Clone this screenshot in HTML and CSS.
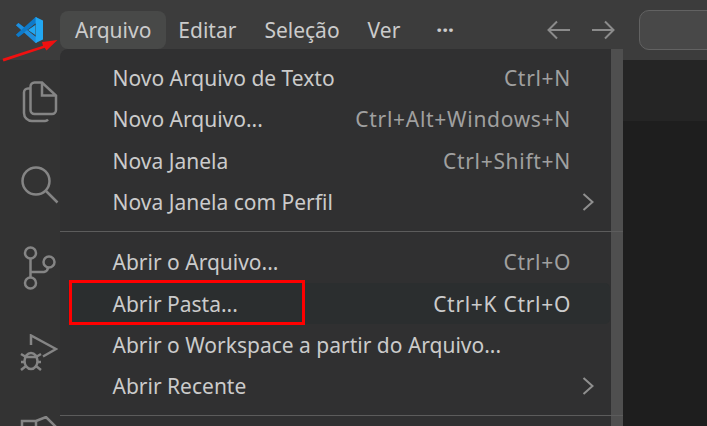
FILE: index.html
```html
<!DOCTYPE html>
<html lang="pt">
<head>
<meta charset="utf-8">
<title>VS Code</title>
<link rel="stylesheet" href="styles.css">
</head>
<body>
<div class="app">
  <header class="titlebar">
    <svg class="logo" viewBox="0 0 30 30" width="30" height="30">
      <path fill="#0a6fb8" d="M1 10.200 3.400 8l7.200 5.200-3.300 2.500zM1 19.800 3.400 22l7.200-5.200-3.300-2.500z"/>
      <path fill="#1f8fde" d="M1 10.200 3.400 8 22 22.800v4.600L20.600 28z"/>
      <path fill="#0e7ac9" d="M1 19.800 3.400 22 22 7.200V2.600L20.600 2z"/>
      <path fill="#22a7f2" d="M20.600 2 28 5.500v19L20.600 28zM21 9.500 13 15l8 5.500z" fill-rule="evenodd"/>
    </svg>
    <nav class="menubar">
      <span class="top-item active">Arquivo</span>
      <span class="top-item">Editar</span>
      <span class="top-item">Seleção</span>
      <span class="top-item">Ver</span>
      <span class="top-item dots">···</span>
    </nav>
    <div class="nav-arrows">
      <svg viewBox="0 0 24 24" width="24" height="24"><path d="M23 12H2M10 3.500 1.500 12l8.500 8.500"/></svg>
      <svg viewBox="0 0 24 24" width="24" height="24"><path d="M1 12h21M14 3.500l8.500 8.500-8.500 8.500"/></svg>
    </div>
    <div class="command"></div>
  </header>
  <div class="body">
    <aside class="activity">
      <svg viewBox="0 0 36 42" width="36" height="42"><path d="M20 1.500h-7.500a4 4 0 0 0-4 4V29a4 4 0 0 0 4 4H30a4 4 0 0 0 4-4V14.500zM20 1.500V14.500H34M8.500 7.500H6a4 4 0 0 0-4 4V32a8 8 0 0 0 8 8h13a4 4 0 0 0 3-1.500"/></svg>
      <svg viewBox="0 0 38 38" width="38" height="38"><circle cx="15" cy="15" r="13.500"/><path d="m25 25 11.500 11.500"/></svg>
      <svg viewBox="0 0 34 44" width="34" height="44"><circle cx="7.500" cy="7" r="5.500"/><circle cx="7.500" cy="37" r="5.500"/><circle cx="26" cy="16" r="5.500"/><path d="M7.500 12.500V31.500M8 26h13a5 5 0 0 0 4-4.500"/></svg>
      <svg class="debug" viewBox="0 0 38 38" width="38" height="38"><path d="M11 11V1.500l25 13.500-13 7.500"/><ellipse cx="11" cy="27" rx="6.500" ry="8"/><path d="M5 23h12M1 20l5 3M21 20l-5 3M1 36l5-4M21 36l-5-4M1 28h4M17 28h4"/></svg>
      <svg viewBox="0 0 40 36" width="40" height="36"><path d="M2 36V5h14v31M16 5l10-4 11 11-11 10"/></svg>
    </aside>
    <main class="editor">
      <div class="tabs"></div>
      <div class="code"></div>
    </main>
  </div>

  <div class="menu">
    <ul class="menu-list">
      <li class="row"><span>Novo Arquivo de Texto</span><span class="key">Ctrl+N</span></li>
      <li class="row"><span>Novo Arquivo...</span><span class="key">Ctrl+Alt+Windows+N</span></li>
      <li class="row"><span>Nova Janela</span><span class="key">Ctrl+Shift+N</span></li>
      <li class="row"><span>Nova Janela com Perfil</span><svg class="chev" viewBox="0 0 12 18" width="12" height="18"><path d="m1.500 1 9 8-9 8"/></svg></li>
      <li class="sep"></li>
      <li class="row"><span>Abrir o Arquivo...</span><span class="key">Ctrl+O</span></li>
      <li class="row hover"><span>Abrir Pasta...</span><span class="key">Ctrl+K Ctrl+O</span></li>
      <li class="row"><span>Abrir o Workspace a partir do Arquivo...</span></li>
      <li class="row"><span>Abrir Recente</span><svg class="chev" viewBox="0 0 12 18" width="12" height="18"><path d="m1.500 1 9 8-9 8"/></svg></li>
      <li class="sep"></li>
    </ul>
    <div class="scrollbar"></div>
  </div>

  <div class="highlight"></div>
  <svg class="arrow" viewBox="0 0 60 24" width="60" height="24"><path d="M1.500 19.800 42 6.800 41 3 56.500 1 45.500 11.500 43.800 8.800 2.500 22.500z"/></svg>
</div>
</body>
</html>
```
FILE: styles.css
```css
* { box-sizing: border-box; }
html, body { margin: 0; padding: 0; }
body {
  width: 707px;
  height: 426px;
  overflow: hidden;
  background: #1e1e1e;
  font-family: "Noto Sans", "Open Sans", sans-serif;
}
.app {
  position: relative;
  width: 707px;
  height: 426px;
  display: flex;
  flex-direction: column;
}
.titlebar {
  height: 60px;
  flex: none;
  background: #3c3c3c;
  display: flex;
  align-items: flex-start;
  padding: 11px 0 0 15px;
  overflow: hidden;
}
.logo { flex: none; margin: 4px 15px 0 0; }
.menubar { display: flex; align-items: center; color: #cbcbcb; font-size: 21px; }
.top-item {
  height: 38px;
  display: flex;
  align-items: center;
  padding: 0 14px;
  border-radius: 8px;
  white-space: nowrap;
}
.top-item.active { background: #484948; padding: 0 15px; }
.top-item.active + .top-item { margin-left: -2px; }
.dots { font-weight: 700; margin-left: 8px; }
.nav-arrows {
  display: flex;
  gap: 20px;
  margin-left: 79px;
  padding-top: 7px;
}
.nav-arrows svg, .activity svg, .chev { fill: none; stroke-width: 2.500; }
.nav-arrows svg { stroke: #8b8b8b; stroke-width: 2; flex: none; }
.command {
  flex: none;
  width: 120px;
  height: 40px;
  margin-left: 24px;
  margin-top: -1px;
  background: #484848;
  border: 1px solid #626262;
  border-radius: 10px;
}
.body { flex: 1; display: flex; min-height: 0; }
.activity {
  width: 60px;
  flex: none;
  background: #333333;
  padding: 0.500px 0 0 20px;
  display: grid;
  grid-template-columns: 40px;
  grid-auto-rows: 83px;
  justify-items: center;
  align-items: center;
  overflow: hidden;
}
.activity svg { stroke: #858585; }
.debug { margin-top: 4px; margin-right: 2px; }
.editor { flex: 1; display: flex; flex-direction: column; }
.tabs { height: 61px; flex: none; background: #252525; }
.code { flex: 1; background: #1e1e1e; }

.menu {
  position: absolute;
  left: 60px;
  top: 49px;
  width: 563px;
  height: 377px;
  background: #303031;
  border-radius: 8px 0 0 0;
  display: flex;
  color: #cbcbcb;
  font-size: 21px;
}
.menu-list {
  list-style: none;
  margin: 0;
  padding: 8.500px 0 0;
  flex: 1;
  min-width: 0;
}
.row {
  height: 41.300px;
  display: flex;
  align-items: center;
  justify-content: space-between;
  padding: 0 40px 0 52.500px;
  white-space: nowrap;
}
.row.hover {
  background: #2b2e2f;
  margin: 0 1px 0 8px;
  padding: 0 39px 0 44.500px;
  border-radius: 5px;
}
.key { color: #a0a0a0; letter-spacing: 0.700px; }
.row.hover .key { color: #cbcbcb; }
.chev { stroke: #8f8f8f; stroke-width: 2; margin-right: -23px; flex: none; }
.sep { height: 1px; background: #5c5c5c; margin: 8px -12px 10px 0; position: relative; z-index: 1; }
.scrollbar { width: 12px; flex: none; background: #4f4f4f; }

.highlight {
  position: absolute;
  left: 69px;
  top: 280px;
  width: 236px;
  height: 45px;
  border: 3px solid #ff0000;
}
.arrow { position: absolute; left: 1px; top: 39px; fill: #f01010; }
```
